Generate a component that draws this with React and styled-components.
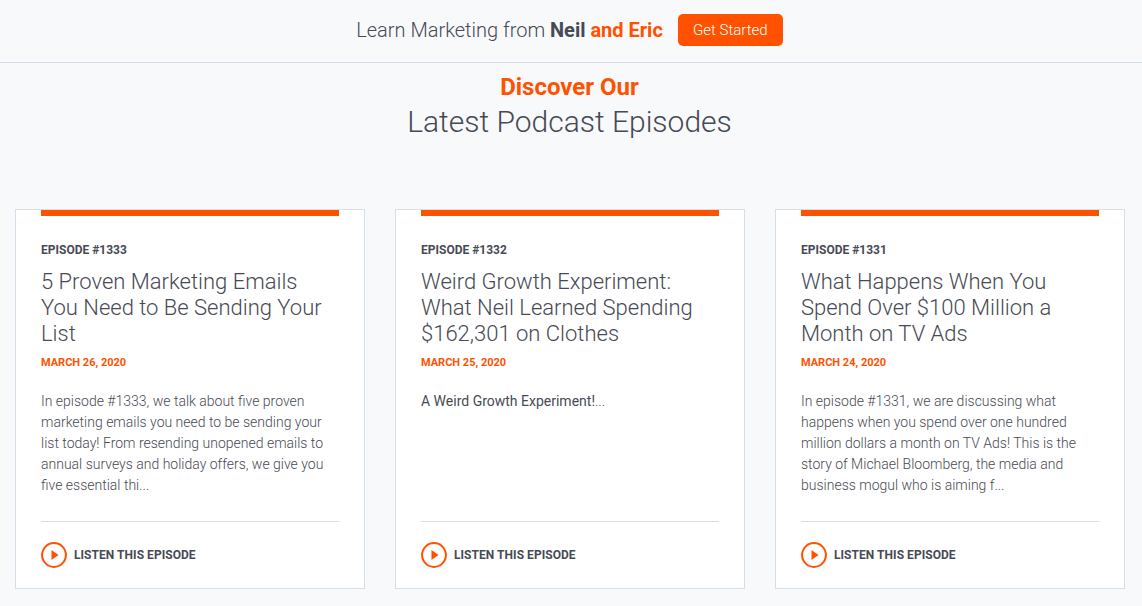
import React from "react";
import styled, { createGlobalStyle } from "styled-components";

const orange = "#ff5100";
const dark = "#474a54";

const GlobalStyle = createGlobalStyle`
  * { box-sizing: border-box; }
  html, body { margin: 0; padding: 0; }
  body {
    background: #f8f9fb;
    font-family: Roboto, "Liberation Sans", sans-serif;
    color: ${dark};
    overflow: hidden;
  }
`;

const TopBar = styled.div`
  height: 63px;
  border-bottom: 1px solid #d5dfe9;
  display: flex;
  align-items: center;
  justify-content: center;
  gap: 15px;
  padding: 0 3px 3px 0;
`;

const TopText = styled.div`
  font-size: 20px;
  font-weight: 300;
  line-height: 28px;
  b { font-weight: 700; }
  em { font-style: normal; font-weight: 700; color: ${orange}; }
`;

const StartButton = styled.a`
  display: flex;
  align-items: center;
  justify-content: center;
  width: 105px;
  height: 32px;
  background: ${orange};
  color: #fff;
  border-radius: 5px;
  font-size: 15px;
  font-weight: 300;
`;

const Heading = styled.div`
  text-align: center;
  height: 146px;
  padding: 10px 3px 0 0;
`;

const Kicker = styled.div`
  color: ${orange};
  font-size: 24px;
  font-weight: 700;
  line-height: 28px;
`;

const Title = styled.h1`
  margin: 1px 0 0;
  font-size: 30px;
  font-weight: 300;
  line-height: 40px;
`;

const Cards = styled.div`
  display: grid;
  grid-template-columns: repeat(3, 350px);
  gap: 30px;
  padding-left: 15px;
`;

const Card = styled.div`
  height: 380px;
  background: #fff;
  border: 1px solid #d5dfe9;
  padding: 0 25px;
  display: flex;
  flex-direction: column;
`;

const Bar = styled.div`
  height: 6px;
  background: ${orange};
  flex: none;
`;

const Episode = styled.div`
  margin-top: 27px;
  font-size: 12px;
  font-weight: 700;
  line-height: 14px;
`;

const CardTitle = styled.h2`
  margin: 12px 0 0;
  font-size: 22px;
  font-weight: 300;
  line-height: 26px;
`;

const DateLine = styled.div`
  margin-top: 9px;
  color: ${orange};
  font-size: 11px;
  font-weight: 700;
  line-height: 14px;
`;

const Summary = styled.p`
  margin: 21px 0 0;
  font-size: 14px;
  font-weight: 300;
  line-height: 21px;
  flex: 1;
  strong { font-weight: 400; }
`;

const Footer = styled.div`
  flex: none;
  height: 67px;
  border-top: 1px solid #d5dfe9;
  display: flex;
  align-items: center;
  gap: 7px;
`;

const ListenText = styled.span`
  font-size: 12px;
  font-weight: 700;
  letter-spacing: 0.05px;
`;

const PlayIcon = () => (
  <svg width="26" height="26" viewBox="0 0 26 26">
    <circle cx="13" cy="13" r="11.9" fill="none" stroke={orange} strokeWidth="2" />
    <path d="M10.5 8 L17.5 13 L10.5 18 Z" fill={orange} />
  </svg>
);

const episodes = [
  {
    num: 1333,
    title: "5 Proven Marketing Emails You Need to Be Sending Your List",
    date: "MARCH 26, 2020",
    text: "In episode #1333, we talk about five proven marketing emails you need to be sending your list today! From resending unopened emails to annual surveys and holiday offers, we give you five essential thi...",
  },
  {
    num: 1332,
    title: "Weird Growth Experiment: What Neil Learned Spending $162,301 on Clothes",
    date: "MARCH 25, 2020",
    lead: "A Weird Growth Experiment!",
    text: "...",
  },
  {
    num: 1331,
    title: "What Happens When You Spend Over $100 Million a Month on TV Ads",
    date: "MARCH 24, 2020",
    text: "In episode #1331, we are discussing what happens when you spend over one hundred million dollars a month on TV Ads! This is the story of Michael Bloomberg, the media and business mogul who is aiming f...",
  },
];

export default function App() {
  return (
    <>
      <GlobalStyle />
      <TopBar>
        <TopText>
          Learn Marketing from <b>Neil</b> <em>and Eric</em>
        </TopText>
        <StartButton>Get Started</StartButton>
      </TopBar>
      <Heading>
        <Kicker>Discover Our</Kicker>
        <Title>Latest Podcast Episodes</Title>
      </Heading>
      <Cards>
        {episodes.map((ep) => (
          <Card key={ep.num}>
            <Bar />
            <Episode>EPISODE #{ep.num}</Episode>
            <CardTitle>{ep.title}</CardTitle>
            <DateLine>{ep.date}</DateLine>
            <Summary>
              {ep.lead && <strong>{ep.lead}</strong>}
              {ep.text}
            </Summary>
            <Footer>
              <PlayIcon />
              <ListenText>LISTEN THIS EPISODE</ListenText>
            </Footer>
          </Card>
        ))}
      </Cards>
    </>
  );
}
